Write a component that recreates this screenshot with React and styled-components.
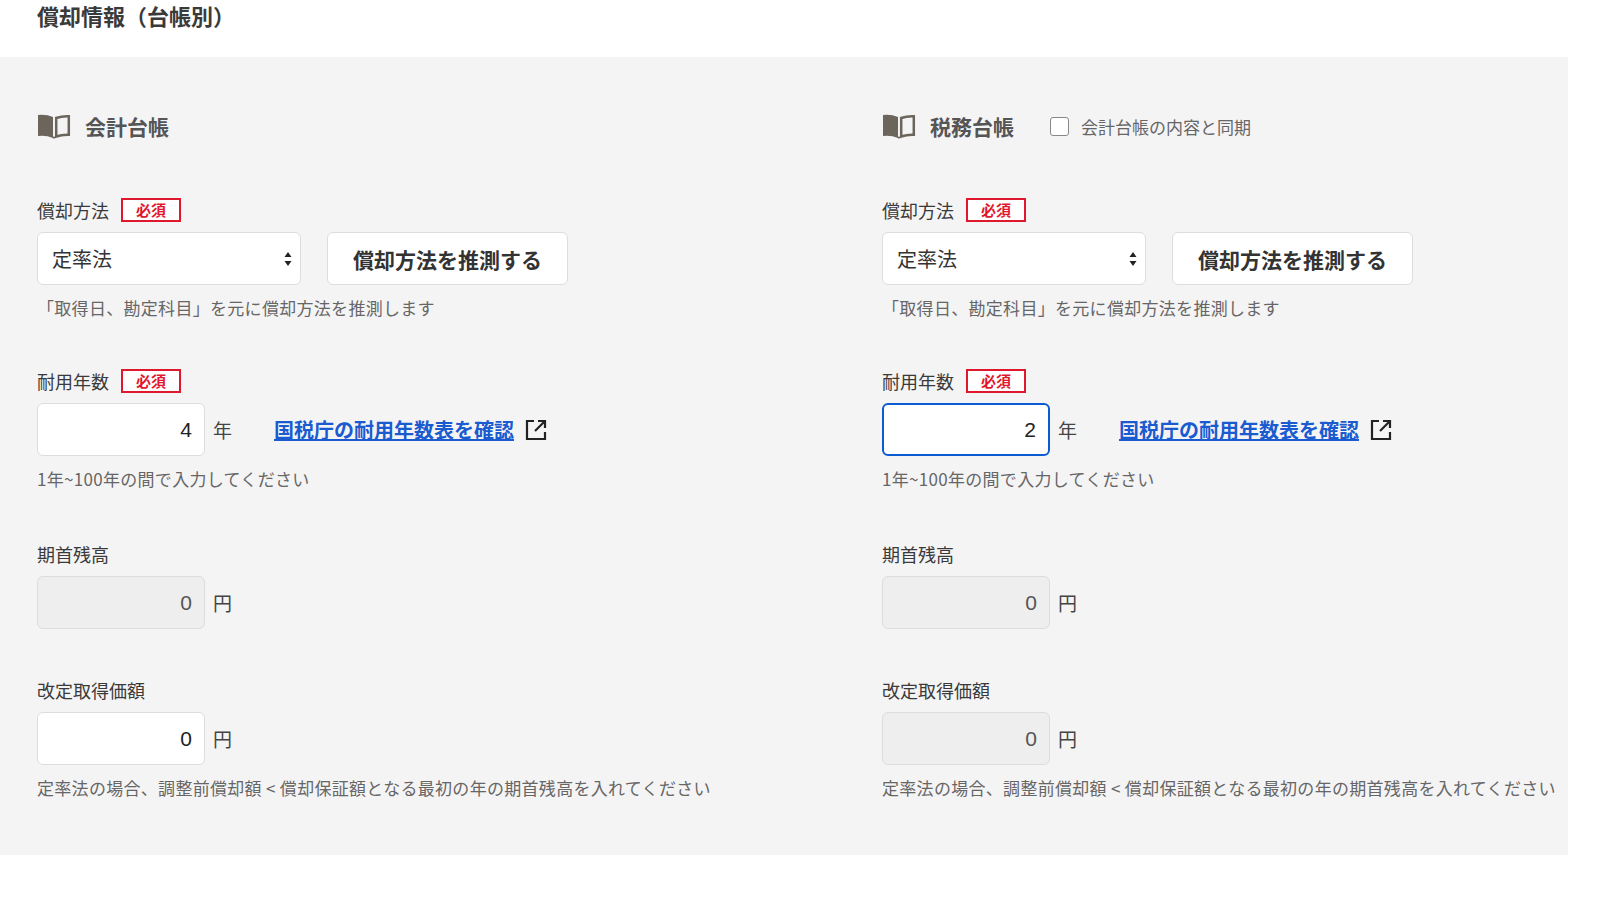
import styled, { createGlobalStyle } from 'styled-components'

const Global = createGlobalStyle`
  body { margin: 0; background: #fff; font-family: "Noto Sans CJK JP", "Noto Sans", sans-serif; color: #3a3a3a; }
`

const Page = styled.div`
  width: 1600px;
  height: 907px;
  overflow: hidden;
  background: #fff;
`
const Title = styled.h2`
  margin: -14px 0 0;
  height: 71px;
  padding: 14px 0 0 37px;
  font-size: 22px;
  font-weight: 700;
  line-height: 30px;
  box-sizing: border-box;
`
const Panel = styled.div`
  background: #f5f4f5;
  width: 1568px;
  height: 798px;
  display: grid;
  grid-template-columns: 845px 1fr;
  padding: 52px 0 0 37px;
  box-sizing: border-box;
  overflow: hidden;
`
const Col = styled.div`
  white-space: nowrap;
`
const Head = styled.div`
  display: flex;
  align-items: center;
  height: 34px;
  gap: 14px;
  font-size: 21px;
  font-weight: 700;
  color: #555;
  margin-bottom: 54px;
`
const Sync = styled.label`
  display: flex;
  align-items: center;
  gap: 12px;
  margin-left: 22px;
  font-size: 17px;
  font-weight: 400;
  color: #666;
`
const Check = styled.span`
  width: 17px;
  height: 17px;
  border: 1.5px solid #888;
  border-radius: 3px;
  background: #fff;
`
const Label = styled.div`
  display: flex;
  align-items: center;
  gap: 12px;
  font-size: 18px;
  height: 26px;
  margin-bottom: 9px;
`
const Req = styled.span`
  border: 2px solid #e0182d;
  color: #e0182d;
  background: #fff;
  font-size: 15px;
  font-weight: 700;
  padding: 0 13px;
  line-height: 20px;
`
const Row = styled.div`
  display: flex;
  align-items: center;
  gap: 8px;
`
const Select = styled.div`
  width: 264px;
  height: 53px;
  box-sizing: border-box;
  background: #fff;
  border: 1px solid #ddd;
  border-radius: 6px;
  display: flex;
  align-items: center;
  justify-content: space-between;
  padding: 0 8px 0 14px;
  font-size: 20px;
  color: #333;
`
const Btn = styled.button`
  margin-left: 18px;
  width: 241px;
  height: 53px;
  background: #fff;
  border: 1px solid #ddd;
  border-radius: 6px;
  font-family: inherit;
  font-size: 21px;
  font-weight: 700;
  color: #333;
`
const Input = styled.div`
  width: 168px;
  height: 53px;
  box-sizing: border-box;
  border: ${p => (p.focus ? '2px solid #0b5bd3' : '1px solid #ddd')};
  background: ${p => (p.disabled ? '#efeeef' : '#fff')};
  border-radius: 6px;
  display: flex;
  align-items: center;
  justify-content: flex-end;
  padding: 0 12px;
  font-family: "Liberation Sans", sans-serif;
  font-size: 21px;
  color: ${p => (p.disabled ? '#555' : '#222')};
`
const Unit = styled.span`
  font-size: 19px;
  color: #444;
`
const Link = styled.a`
  margin-left: 34px;
  display: flex;
  align-items: center;
  gap: 10px;
  color: #1a5bd0;
  font-weight: 700;
  font-size: 20px;
  text-decoration: underline;
`
const Hint = styled.div`
  font-size: 17px;
  letter-spacing: 0.3px;
  color: #666;
  margin-top: 10px;
  margin-bottom: ${p => p.mb || 0}px;
`
const Gap = styled.div`
  height: ${p => p.h}px;
`

const Book = () => (
  <svg width="34" height="26" viewBox="0 0 34 26">
    <path d="M1 2 Q9 1 16 4 V25 Q9 22 1 23 Z" fill="#6b655c" />
    <path d="M19.2 5 Q25 3 31.8 3.3 V21.8 Q25 21.5 19.2 23.5 Z" fill="none" stroke="#6b655c" strokeWidth="2.5" />
    <path d="M16 25 Q17 24 18 25" stroke="#6b655c" strokeWidth="2" fill="none" />
  </svg>
)
const Ext = () => (
  <svg width="24" height="24" viewBox="0 0 24 24" fill="none" stroke="#222" strokeWidth="2.2">
    <path d="M10 3 H3 V21 H21 V14" />
    <path d="M14 3 H21 V10 M21 3 L11 13" />
  </svg>
)
const Arrows = () => (
  <svg width="8" height="16" viewBox="0 0 8 16"><path d="M4 1 L7.5 6 H0.5 Z M4 15 L7.5 10 H0.5 Z" fill="#222" /></svg>
)

const Ledger = ({ name, sync, years, focus, disabledRev }) => (
  <Col>
    <Head>
      <Book />
      {name}
      {sync && (
        <Sync>
          <Check />
          会計台帳の内容と同期
        </Sync>
      )}
    </Head>
    <Label>償却方法<Req>必須</Req></Label>
    <Row>
      <Select>定率法<Arrows /></Select>
      <Btn>償却方法を推測する</Btn>
    </Row>
    <Hint mb={48}>「取得日、勘定科目」を元に償却方法を推測します</Hint>
    <Label>耐用年数<Req>必須</Req></Label>
    <Row>
      <Input focus={focus}>{years}</Input>
      <Unit>年</Unit>
      <Link>国税庁の耐用年数表を確認<Ext /></Link>
    </Row>
    <Hint mb={50}>1年~100年の間で入力してください</Hint>
    <Label>期首残高</Label>
    <Row>
      <Input disabled>0</Input>
      <Unit>円</Unit>
    </Row>
    <Gap h={48} />
    <Label>改定取得価額</Label>
    <Row>
      <Input disabled={disabledRev}>0</Input>
      <Unit>円</Unit>
    </Row>
    <Hint>定率法の場合、調整前償却額 &lt; 償却保証額となる最初の年の期首残高を入れてください</Hint>
  </Col>
)

export default function App() {
  return (
    <Page>
      <Global />
      <Title>償却情報（台帳別）</Title>
      <Panel>
        <Ledger name="会計台帳" years="4" />
        <Ledger name="税務台帳" sync years="2" focus disabledRev />
      </Panel>
    </Page>
  )
}
